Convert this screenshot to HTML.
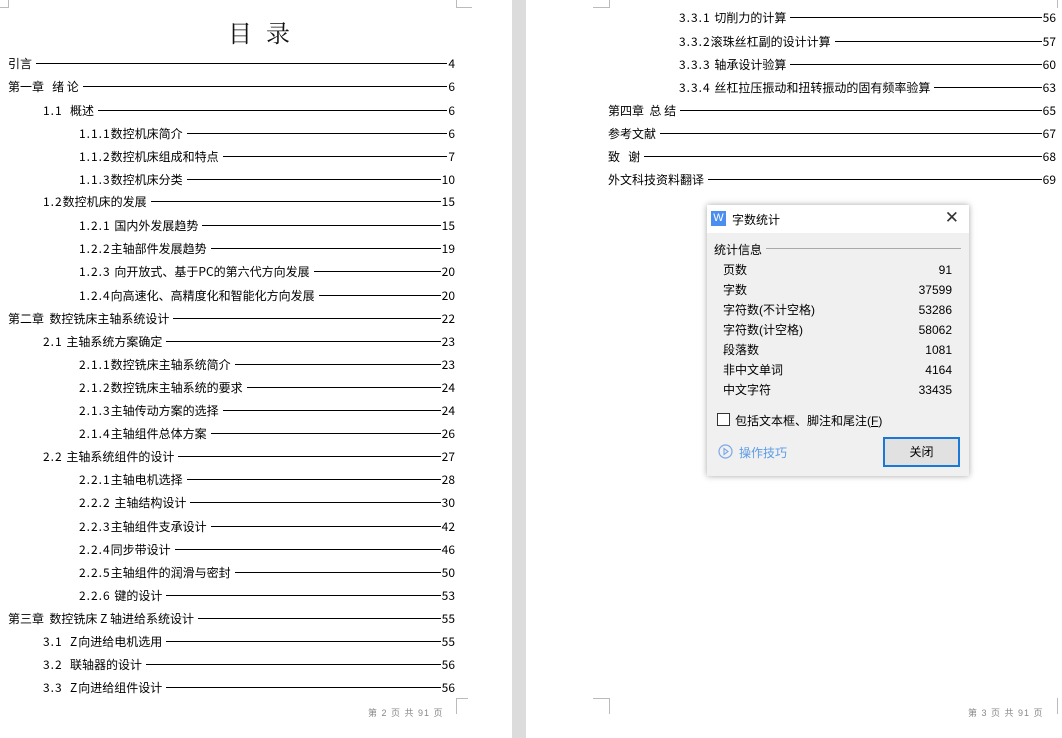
<!DOCTYPE html>
<html><head><meta charset="utf-8"><style>
*{margin:0;padding:0;box-sizing:border-box}
body{width:1062px;height:738px;position:relative;overflow:hidden;background:#fff;font-family:"Liberation Sans","Noto Sans CJK SC",sans-serif;color:#000}
.gap{position:absolute;left:512px;top:0;width:14px;height:738px;background:#dcdcdc}
.r{position:absolute;display:flex;align-items:center;height:16px;font-size:12px;white-space:pre;font-family:"Noto Sans CJK SC",sans-serif}
.r .l{flex:1;border-bottom:1px solid #000;height:0;margin:0 1px 0 4px;align-self:center}
.n{letter-spacing:1px}
.c{position:absolute;width:1px;background:#bbb}
.h{position:absolute;height:1px;background:#bbb}
.foot{position:absolute;font-size:9px;color:#888;top:706px;letter-spacing:1px}
.dlg{position:absolute;left:707px;top:205px;width:262px;height:271px;background:#f0f0f0;box-shadow:0 0 6px rgba(0,0,0,.35);font-size:12px;font-family:"Liberation Sans","Noto Sans CJK SC",sans-serif}
.tb{height:28px;background:#fff;position:relative}
.st,.sv{position:absolute;font-size:12px;height:16px;line-height:16px}
.st{left:16px}.sv{right:17px}
</style></head><body>
<div class="gap"></div>
<div class="c" style="left:8px;top:0;height:8px"></div><div class="h" style="left:0;top:7px;width:8px"></div>
<div class="c" style="left:456px;top:0;height:8px"></div><div class="h" style="left:456px;top:7px;width:16px"></div>
<div class="c" style="left:456px;top:698px;height:16px"></div><div class="h" style="left:456px;top:698px;width:12px"></div>
<div class="c" style="left:609px;top:0;height:8px"></div><div class="h" style="left:593px;top:7px;width:16px"></div>
<div class="c" style="left:609px;top:698px;height:16px"></div><div class="h" style="left:593px;top:698px;width:16px"></div>
<div class="c" style="left:1057px;top:0;height:8px"></div>
<div class="c" style="left:1057px;top:698px;height:16px"></div>
<div style="position:absolute;left:228px;top:14px;font-size:24px;font-family:'Noto Serif CJK SC',serif;letter-spacing:14px;color:#111">目录</div>

<div class="r" style="left:8px;width:447px;top:55px">引言<span class="l"></span>4</div>
<div class="r" style="left:8px;width:447px;top:78px">第一章   绪 论<span class="l"></span>6</div>
<div class="r" style="left:43px;width:412px;top:102px"><span class="n">1.1  </span>概述<span class="l"></span>6</div>
<div class="r" style="left:79px;width:376px;top:125px"><span class="n">1.1.1</span>数控机床简介<span class="l"></span>6</div>
<div class="r" style="left:79px;width:376px;top:148px"><span class="n">1.1.2</span>数控机床组成和特点<span class="l"></span>7</div>
<div class="r" style="left:79px;width:376px;top:171px"><span class="n">1.1.3</span>数控机床分类<span class="l"></span>10</div>
<div class="r" style="left:43px;width:412px;top:193px"><span class="n">1.2</span>数控机床的发展<span class="l"></span>15</div>
<div class="r" style="left:79px;width:376px;top:217px"><span class="n">1.2.1 </span>国内外发展趋势<span class="l"></span>15</div>
<div class="r" style="left:79px;width:376px;top:240px"><span class="n">1.2.2</span>主轴部件发展趋势<span class="l"></span>19</div>
<div class="r" style="left:79px;width:376px;top:263px"><span class="n">1.2.3 </span>向开放式、基于PC的第六代方向发展<span class="l"></span>20</div>
<div class="r" style="left:79px;width:376px;top:287px"><span class="n">1.2.4</span>向高速化、高精度化和智能化方向发展<span class="l"></span>20</div>
<div class="r" style="left:8px;width:447px;top:310px">第二章  数控铣床主轴系统设计<span class="l"></span>22</div>
<div class="r" style="left:43px;width:412px;top:333px"><span class="n">2.1 </span>主轴系统方案确定<span class="l"></span>23</div>
<div class="r" style="left:79px;width:376px;top:356px"><span class="n">2.1.1</span>数控铣床主轴系统简介<span class="l"></span>23</div>
<div class="r" style="left:79px;width:376px;top:379px"><span class="n">2.1.2</span>数控铣床主轴系统的要求<span class="l"></span>24</div>
<div class="r" style="left:79px;width:376px;top:402px"><span class="n">2.1.3</span>主轴传动方案的选择<span class="l"></span>24</div>
<div class="r" style="left:79px;width:376px;top:425px"><span class="n">2.1.4</span>主轴组件总体方案<span class="l"></span>26</div>
<div class="r" style="left:43px;width:412px;top:448px"><span class="n">2.2 </span>主轴系统组件的设计<span class="l"></span>27</div>
<div class="r" style="left:79px;width:376px;top:471px"><span class="n">2.2.1</span>主轴电机选择<span class="l"></span>28</div>
<div class="r" style="left:79px;width:376px;top:494px"><span class="n">2.2.2 </span>主轴结构设计<span class="l"></span>30</div>
<div class="r" style="left:79px;width:376px;top:518px"><span class="n">2.2.3</span>主轴组件支承设计<span class="l"></span>42</div>
<div class="r" style="left:79px;width:376px;top:541px"><span class="n">2.2.4</span>同步带设计<span class="l"></span>46</div>
<div class="r" style="left:79px;width:376px;top:564px"><span class="n">2.2.5</span>主轴组件的润滑与密封<span class="l"></span>50</div>
<div class="r" style="left:79px;width:376px;top:587px"><span class="n">2.2.6 </span>键的设计<span class="l"></span>53</div>
<div class="r" style="left:8px;width:447px;top:610px">第三章  数控铣床 Z 轴进给系统设计<span class="l"></span>55</div>
<div class="r" style="left:43px;width:412px;top:633px"><span class="n">3.1  Z</span>向进给电机选用<span class="l"></span>55</div>
<div class="r" style="left:43px;width:412px;top:656px"><span class="n">3.2  </span>联轴器的设计<span class="l"></span>56</div>
<div class="r" style="left:43px;width:412px;top:679px"><span class="n">3.3  Z</span>向进给组件设计<span class="l"></span>56</div>
<div class="foot" style="left:368px">第 2 页 共 91 页</div>

<div class="r" style="left:679px;width:377px;top:9px"><span class="n">3.3.1 </span>切削力的计算<span class="l"></span>56</div>
<div class="r" style="left:679px;width:377px;top:33px"><span class="n">3.3.2</span>滚珠丝杠副的设计计算<span class="l"></span>57</div>
<div class="r" style="left:679px;width:377px;top:56px"><span class="n">3.3.3 </span>轴承设计验算<span class="l"></span>60</div>
<div class="r" style="left:679px;width:377px;top:79px"><span class="n">3.3.4 </span>丝杠拉压振动和扭转振动的固有频率验算<span class="l"></span>63</div>
<div class="r" style="left:608px;width:448px;top:102px">第四章  总 结<span class="l"></span>65</div>
<div class="r" style="left:608px;width:448px;top:125px">参考文献<span class="l"></span>67</div>
<div class="r" style="left:608px;width:448px;top:148px">致   谢<span class="l"></span>68</div>
<div class="r" style="left:608px;width:448px;top:171px">外文科技资料翻译<span class="l"></span>69</div>
<div class="foot" style="left:968px">第 3 页 共 91 页</div>

<div class="dlg">
 <div class="tb">
  <div style="position:absolute;left:4px;top:6px;width:15px;height:15px;background:#4a8ff0;color:#fff;font-size:11px;text-align:center;line-height:15px">W</div>
  <div style="position:absolute;left:25px;top:6px">字数统计</div>
  <div style="position:absolute;right:10px;top:3px;font-size:17px;color:#333">✕</div>
 </div>
 <div style="position:absolute;left:7px;top:36px">统计信息</div>
 <div class="h" style="left:59px;top:43px;width:195px;background:#aaa"></div>
 <div class="st" style="top:57px">页数</div><div class="sv" style="top:57px">91</div>
 <div class="st" style="top:77px">字数</div><div class="sv" style="top:77px">37599</div>
 <div class="st" style="top:97px">字符数(不计空格)</div><div class="sv" style="top:97px">53286</div>
 <div class="st" style="top:117px">字符数(计空格)</div><div class="sv" style="top:117px">58062</div>
 <div class="st" style="top:137px">段落数</div><div class="sv" style="top:137px">1081</div>
 <div class="st" style="top:157px">非中文单词</div><div class="sv" style="top:157px">4164</div>
 <div class="st" style="top:177px">中文字符</div><div class="sv" style="top:177px">33435</div>
 <div style="position:absolute;left:10px;top:208px;width:13px;height:13px;border:1px solid #333;background:#fff"></div>
 <div style="position:absolute;left:28px;top:207px">包括文本框、脚注和尾注(<u>F</u>)</div>
 <svg style="position:absolute;left:11px;top:239px" width="15" height="15" viewBox="0 0 15 15"><circle cx="7.5" cy="7.5" r="6.5" fill="none" stroke="#7aa8e8" stroke-width="1.2"/><path d="M6 4.5 L10 7.5 L6 10.5 Z" fill="none" stroke="#7aa8e8" stroke-width="1.1"/></svg>
 <div style="position:absolute;left:32px;top:239px;color:#5b9be6">操作技巧</div>
 <div style="position:absolute;left:176px;top:232px;width:77px;height:30px;border:2px solid #1a78d6;background:#e1e1e1;text-align:center;line-height:26px">关闭</div>
</div>
</body></html>
